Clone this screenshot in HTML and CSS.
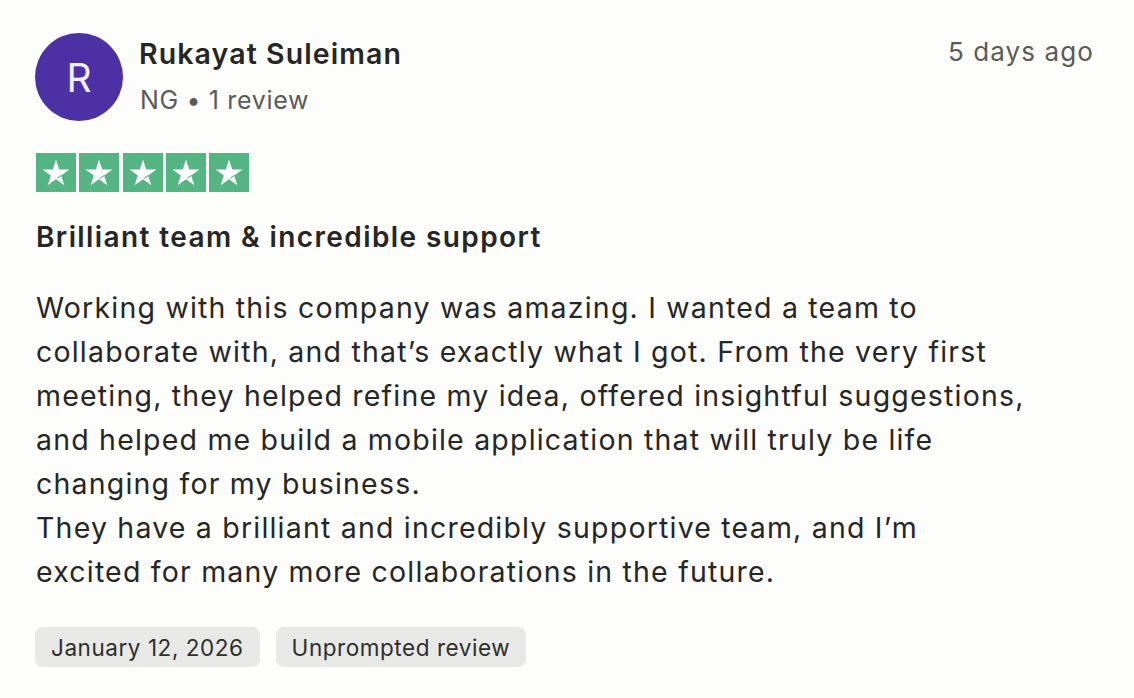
FILE: index.html
```html
<!DOCTYPE html>
<html lang="en">
<head>
<meta charset="utf-8">
<title>Review</title>
<link rel="stylesheet" href="styles.css">
</head>
<body>
<article class="review">
  <header class="head">
    <div class="avatar">R</div>
    <div class="who">
      <div class="name">Rukayat Suleiman</div>
      <div class="meta">NG • 1 review</div>
    </div>
    <div class="ago">5 days ago</div>
  </header>
  <div class="stars">
    <span class="star"><svg viewBox="0 0 40 39" width="40" height="39"><path d="M20 6.6 L23.19 16.41 L33.5 16.4 L25.15 22.47 L28.35 32.3 L20 26.22 L11.65 32.3 L14.85 22.47 L6.5 16.4 L16.81 16.41 Z" fill="#fff"/><path d="M21.2 25.4 L25.3 22.4" stroke="#54b582" stroke-width="1.1"/></svg></span>
    <span class="star"><svg viewBox="0 0 40 39" width="40" height="39"><path d="M20 6.6 L23.19 16.41 L33.5 16.4 L25.15 22.47 L28.35 32.3 L20 26.22 L11.65 32.3 L14.85 22.47 L6.5 16.4 L16.81 16.41 Z" fill="#fff"/><path d="M21.2 25.4 L25.3 22.4" stroke="#54b582" stroke-width="1.1"/></svg></span>
    <span class="star"><svg viewBox="0 0 40 39" width="40" height="39"><path d="M20 6.6 L23.19 16.41 L33.5 16.4 L25.15 22.47 L28.35 32.3 L20 26.22 L11.65 32.3 L14.85 22.47 L6.5 16.4 L16.81 16.41 Z" fill="#fff"/><path d="M21.2 25.4 L25.3 22.4" stroke="#54b582" stroke-width="1.1"/></svg></span>
    <span class="star"><svg viewBox="0 0 40 39" width="40" height="39"><path d="M20 6.6 L23.19 16.41 L33.5 16.4 L25.15 22.47 L28.35 32.3 L20 26.22 L11.65 32.3 L14.85 22.47 L6.5 16.4 L16.81 16.41 Z" fill="#fff"/><path d="M21.2 25.4 L25.3 22.4" stroke="#54b582" stroke-width="1.1"/></svg></span>
    <span class="star"><svg viewBox="0 0 40 39" width="40" height="39"><path d="M20 6.6 L23.19 16.41 L33.5 16.4 L25.15 22.47 L28.35 32.3 L20 26.22 L11.65 32.3 L14.85 22.47 L6.5 16.4 L16.81 16.41 Z" fill="#fff"/><path d="M21.2 25.4 L25.3 22.4" stroke="#54b582" stroke-width="1.1"/></svg></span>
  </div>
  <h2 class="title">Brilliant team &amp; incredible support</h2>
  <p class="body">Working with this company was amazing. I wanted a team to<br>collaborate with, and that’s exactly what I got. From the very first<br>meeting, they helped refine my idea, offered insightful suggestions,<br>and helped me build a mobile application that will truly be life<br>changing for my business.<br>They have a brilliant and incredibly supportive team, and I’m<br>excited for many more collaborations in the future.</p>
  <div class="tags">
    <span class="tag">January 12, 2026</span>
    <span class="tag">Unprompted review</span>
  </div>
</article>
</body>
</html>
```

FILE: styles.css
```css
html, body {
  margin: 0;
  padding: 0;
  background: #fdfdfc;
}
body {
  font-family: Inter, "Noto Sans", sans-serif;
  color: #262624;
}
.review {
  padding: 33px 41px 0 35px;
}
.head {
  display: flex;
  align-items: flex-start;
}
.avatar {
  width: 88px;
  height: 88px;
  border-radius: 50%;
  background: #4b31a3;
  color: #f1effa;
  font-size: 39px;
  font-weight: 400;
  display: flex;
  align-items: center;
  justify-content: center;
  flex: none;
}
.who {
  margin-left: 17px;
  padding-top: 3px;
}
.name {
  font-size: 28.5px;
  font-weight: 600;
  line-height: 36px;
  letter-spacing: 1.1px;
  margin-left: -1px;
}
.meta {
  font-size: 25px;
  line-height: 34px;
  color: #5b5b56;
  margin-top: 11px;
  letter-spacing: 0.65px;
}
.ago {
  margin-left: auto;
  font-size: 26px;
  line-height: 36px;
  color: #5b5b56;
  padding-top: 1px;
  letter-spacing: 1.1px;
  margin-right: -1px;
}
.stars {
  display: flex;
  gap: 3.3px;
  margin-top: 32px;
  margin-left: 1px;
}
.star {
  width: 40px;
  height: 39px;
  background: #54b582;
  display: block;
}
.star svg { display: block; }
.title {
  font-size: 28px;
  font-weight: 600;
  line-height: 36px;
  margin: 27px 0 0 1px;
  letter-spacing: 1.4px;
}
.body {
  font-size: 28.5px;
  line-height: 44px;
  margin: 31px 0 0 1px;
  letter-spacing: 1.2px;
}
.tags {
  display: flex;
  gap: 16px;
  margin-top: 33px;
}
.tag {
  background: #e8e8e6;
  border-radius: 8px;
  height: 40px;
  padding: 0 16px;
  display: flex;
  align-items: center;
  font-size: 22.5px;
  letter-spacing: 0.55px;
  color: #2e2e2c;
}
```
